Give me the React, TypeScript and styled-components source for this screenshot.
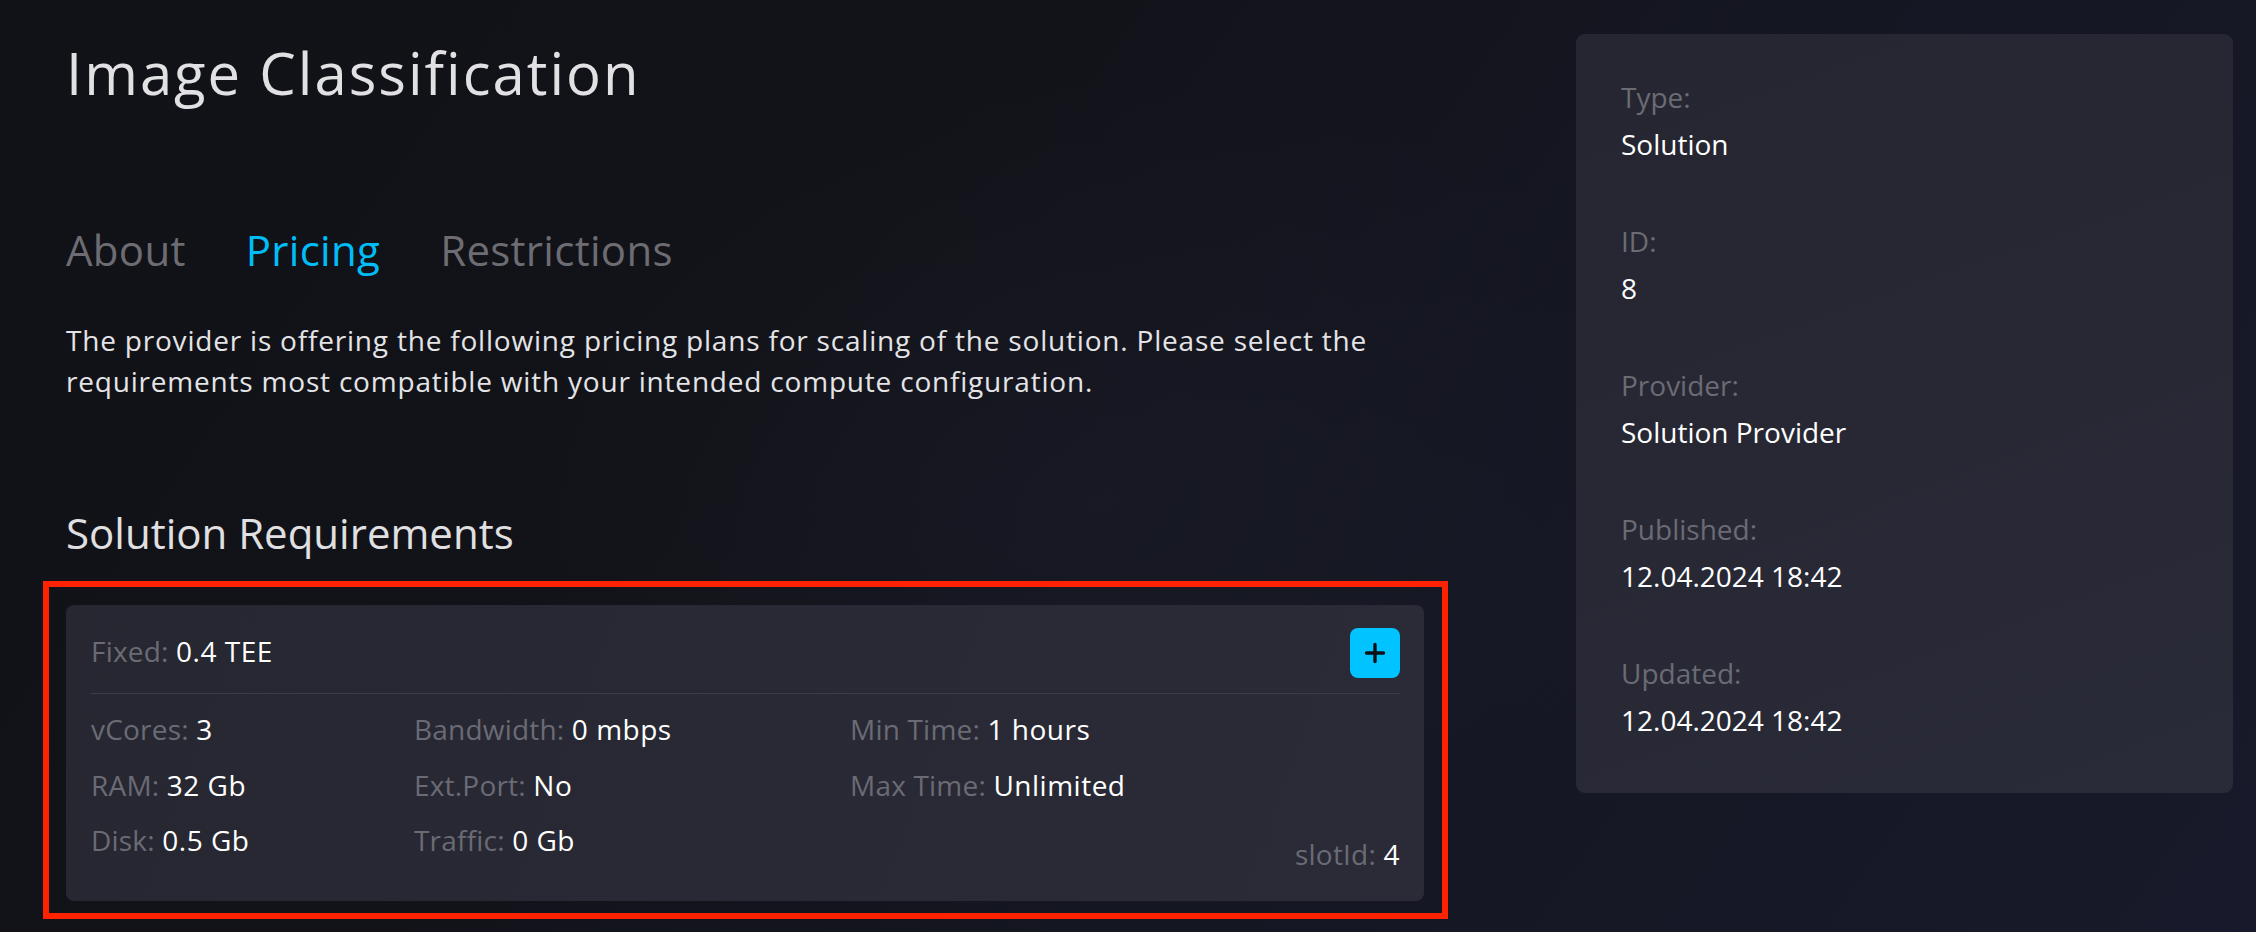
import React from "react";
import styled, { createGlobalStyle } from "styled-components";

const GlobalStyle = createGlobalStyle`
  html, body {
    margin: 0;
    padding: 0;
    background: #121319;
  }
  body {
    font-family: "Open Sans", "Liberation Sans", sans-serif;
    -webkit-font-smoothing: antialiased;
  }
  * { box-sizing: border-box; }
`;

const Page = styled.div`
  width: 2256px;
  height: 932px;
  overflow: hidden;
  display: flex;
  align-items: flex-start;
  gap: 152px;
  padding-left: 66px;
  background:
    radial-gradient(ellipse 900px 600px at 1100px 500px, rgba(40, 42, 60, 0.18), transparent 70%),
    linear-gradient(125deg, #111217 0%, #121319 35%, #151724 70%, #181a2b 100%);
`;

const Main = styled.main`
  width: 1358px;
  display: flex;
  flex-direction: column;
  padding-top: 38px;
`;

const Title = styled.h1`
  margin: 0;
  font-size: 58px;
  line-height: 70px;
  font-weight: 400;
  letter-spacing: 2px;
  color: #e1e1e3;
`;

const Tabs = styled.nav`
  display: flex;
  gap: 60px;
  margin-top: 112px;
`;

const Tab = styled.span<{ $active?: boolean }>`
  font-size: 42px;
  line-height: 60px;
  letter-spacing: 0.3px;
  color: ${(p) => (p.$active ? "#00bdf7" : "#6c6c72")};
`;

const Intro = styled.p`
  margin: 40px 0 0;
  max-width: 1335px;
  font-size: 28px;
  line-height: 41px;
  letter-spacing: 0.8px;
  color: #e4e4e6;
`;

const SectionTitle = styled.h2`
  margin: 101px 0 0;
  font-size: 42px;
  line-height: 60px;
  font-weight: 400;
  color: #e0e0e2;
`;

const CardWrap = styled.div`
  position: relative;
  margin-top: 42px;
`;

const Highlight = styled.div`
  position: absolute;
  top: -24px;
  left: -23px;
  right: -24px;
  bottom: -18px;
  border: 6px solid #ff2200;
  pointer-events: none;
`;

const Card = styled.section`
  background: linear-gradient(110deg, #262731 0%, #282934 50%, #2a2b37 100%);
  border-radius: 8px;
  padding: 23px 24px 26px 25px;
  display: flex;
  flex-direction: column;
`;

const CardHeader = styled.div`
  display: flex;
  align-items: center;
  justify-content: space-between;
  height: 50px;
`;

const Divider = styled.hr`
  margin: 15px 0 0;
  border: none;
  height: 1px;
  background: #3b3c47;
`;

const CardBody = styled.div`
  display: flex;
  align-items: flex-end;
  margin-top: 14px;
`;

const SpecGrid = styled.div`
  flex: 1;
  display: grid;
  grid-template-columns: 323px 436px 1fr;
  row-gap: 13.5px;
  padding-bottom: 14px;
`;

const Field = styled.div<{ $raised?: boolean }>`
  font-size: 28px;
  line-height: 42px;
  letter-spacing: 0.2px;
  white-space: nowrap;
  margin-top: ${(p) => (p.$raised ? "-5px" : "0")};
`;

const Label = styled.span`
  color: #6a6b74;
`;

const Value = styled.span`
  color: #ffffff;
  letter-spacing: 0.5px;
`;

const AddButton = styled.button`
  width: 50px;
  height: 50px;
  border: none;
  border-radius: 8px;
  background: #00c3ff;
  display: flex;
  align-items: center;
  justify-content: center;
  padding: 0;
  cursor: pointer;
`;

const Panel = styled.aside`
  margin-top: 34px;
  width: 657px;
  background: linear-gradient(160deg, #252631 0%, #272834 50%, #2a2b38 100%);
  border-radius: 9px;
  padding: 43px 45px 53px;
  display: flex;
  flex-direction: column;
  gap: 57px;
`;

const InfoGroup = styled.div`
  display: flex;
  flex-direction: column;
  gap: 7px;
`;

const InfoLabel = styled.div`
  font-size: 28px;
  line-height: 40px;
  color: #6a6b74;
`;

const InfoValue = styled.div`
  font-size: 28px;
  line-height: 40px;
  color: #ffffff;
`;

const PlusIcon = () => (
  <svg width="22" height="22" viewBox="0 0 22 22" fill="none">
    <path d="M11 2.5V19.5M2.5 11H19.5" stroke="#0e1016" strokeWidth="3.4" strokeLinecap="round" />
  </svg>
);

const specs: [string, string][] = [
  ["vCores", "3"],
  ["Bandwidth", "0 mbps"],
  ["Min Time", "1 hours"],
  ["RAM", "32 Gb"],
  ["Ext.Port", "No"],
  ["Max Time", "Unlimited"],
  ["Disk", "0.5 Gb"],
  ["Traffic", "0 Gb"],
];

const info: [string, string][] = [
  ["Type:", "Solution"],
  ["ID:", "8"],
  ["Provider:", "Solution Provider"],
  ["Published:", "12.04.2024 18:42"],
  ["Updated:", "12.04.2024 18:42"],
];

export default function App() {
  return (
    <>
      <GlobalStyle />
      <Page>
        <Main>
          <Title>Image Classification</Title>
          <Tabs>
            <Tab>About</Tab>
            <Tab $active>Pricing</Tab>
            <Tab>Restrictions</Tab>
          </Tabs>
          <Intro>
            The provider is offering the following pricing plans for scaling of the solution. Please select the
            requirements most compatible with your intended compute configuration.
          </Intro>
          <SectionTitle>Solution Requirements</SectionTitle>
          <CardWrap>
            <Card>
              <CardHeader>
                <Field $raised>
                  <Label>Fixed: </Label>
                  <Value>0.4 TEE</Value>
                </Field>
                <AddButton aria-label="Add">
                  <PlusIcon />
                </AddButton>
              </CardHeader>
              <Divider />
              <CardBody>
                <SpecGrid>
                  {specs.map(([k, v]) => (
                    <Field key={k}>
                      <Label>{k}: </Label>
                      <Value>{v}</Value>
                    </Field>
                  ))}
                </SpecGrid>
                <Field>
                  <Label>slotId: </Label>
                  <Value>4</Value>
                </Field>
              </CardBody>
            </Card>
            <Highlight />
          </CardWrap>
        </Main>
        <Panel>
          {info.map(([k, v]) => (
            <InfoGroup key={k}>
              <InfoLabel>{k}</InfoLabel>
              <InfoValue>{v}</InfoValue>
            </InfoGroup>
          ))}
        </Panel>
      </Page>
    </>
  );
}
